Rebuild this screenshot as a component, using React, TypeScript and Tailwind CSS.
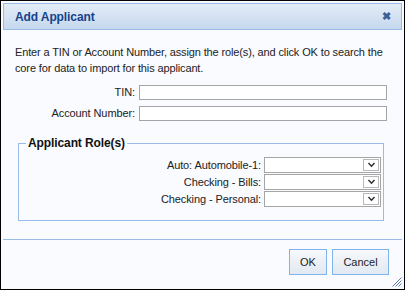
import React from 'react';

const font = { fontFamily: '"Liberation Sans", Arial, sans-serif' };

const Chevron: React.FC = () => (
  <svg width="9" height="6" viewBox="0 0 9 6">
    <path d="M1.5 1 L4.5 4.2 L7.5 1" fill="none" stroke="#2b2b2b" strokeWidth="1.4" />
  </svg>
);

const RoleRow: React.FC<{ label: string }> = ({ label }) => (
  <div className="flex h-[16px] items-center justify-end gap-[3px]">
    <span className="text-[11px] leading-none tracking-[-0.1px] text-[#222]">{label}</span>
    <div className="flex h-[16px] w-[117px] border border-[#a5a5a5] bg-white">
      <div className="flex-1" />
      <div className="my-[1px] mr-[1px] flex w-[16px] items-center justify-center border border-[#b8b8b8] bg-white">
        <Chevron />
      </div>
    </div>
  </div>
);

const App: React.FC = () => {
  return (
    <div className="h-[290px] w-[405px] border border-black bg-[#f9fbfe] p-[2px]" style={font}>
      <div className="flex h-full flex-col">
        {/* Header */}
        <div className="flex h-[27px] shrink-0 items-center justify-between border border-[#99bbe8] bg-gradient-to-b from-[#e3ecf7] to-[#c6d8ee] pl-[11px] pr-[10px]">
          <span className="text-[12px] font-bold tracking-[-0.1px] text-[#15428b]">Add Applicant</span>
          <span className="text-[11px] font-bold leading-none text-[#3a5f95]">✖</span>
        </div>

        {/* Body */}
        <div className="flex-1 pl-[12px] pt-[14px]">
          <p className="w-[380px] text-[11px] leading-[16px] tracking-[-0.13px] text-[#222]">
            Enter a TIN or Account Number, assign the role(s), and click OK to search the core for data to import for this applicant.
          </p>

          <div className="mt-[9px] flex flex-col gap-[6px]">
            <div className="flex h-[15px] items-center gap-[4px]">
              <span className="w-[120px] text-right text-[11px] leading-none tracking-[-0.1px] text-[#222]">TIN:</span>
              <div className="h-[15px] w-[248px] border border-[#a5a5a5] bg-white" />
            </div>
            <div className="flex h-[15px] items-center gap-[4px]">
              <span className="w-[120px] text-right text-[11px] leading-none tracking-[-0.1px] text-[#222]">Account Number:</span>
              <div className="h-[15px] w-[248px] border border-[#a5a5a5] bg-white" />
            </div>
          </div>

          <fieldset className="ml-[3px] mt-[14px] w-[366px] border border-[#99bbe8] pb-[13px] pl-[8px] pr-[2px] pt-[6px]">
            <legend className="ml-[-1px] px-[2px] text-[12px] font-bold leading-[16px] tracking-[-0.1px] text-[#111]">Applicant Role(s)</legend>
            <div className="flex flex-col gap-[1px]">
              <RoleRow label="Auto: Automobile-1:" />
              <RoleRow label="Checking - Bills:" />
              <RoleRow label="Checking - Personal:" />
            </div>
          </fieldset>
        </div>

        {/* Footer */}
        <div className="relative flex h-[48px] shrink-0 items-start justify-end gap-[5px] border-t border-[#99bbe8] pr-[13px] pt-[9px]">
          <button className="h-[26px] w-[38px] border border-[#7eb4ea] bg-gradient-to-b from-[#f6f8fb] to-[#e2e9f2] text-[11px] text-[#222]">OK</button>
          <button className="h-[26px] w-[57px] border border-[#7eb4ea] bg-gradient-to-b from-[#f6f8fb] to-[#e2e9f2] text-[11px] text-[#222]">Cancel</button>
          <svg className="absolute bottom-[0px] right-[0px]" width="11" height="11" viewBox="0 0 11 11">
            <path d="M10.5 1.5 L1.5 10.5 M10.5 4.5 L4.5 10.5 M10.5 7.5 L7.5 10.5" stroke="#5a7cad" strokeWidth="1" />
          </svg>
        </div>
      </div>
    </div>
  );
};

export default App;
